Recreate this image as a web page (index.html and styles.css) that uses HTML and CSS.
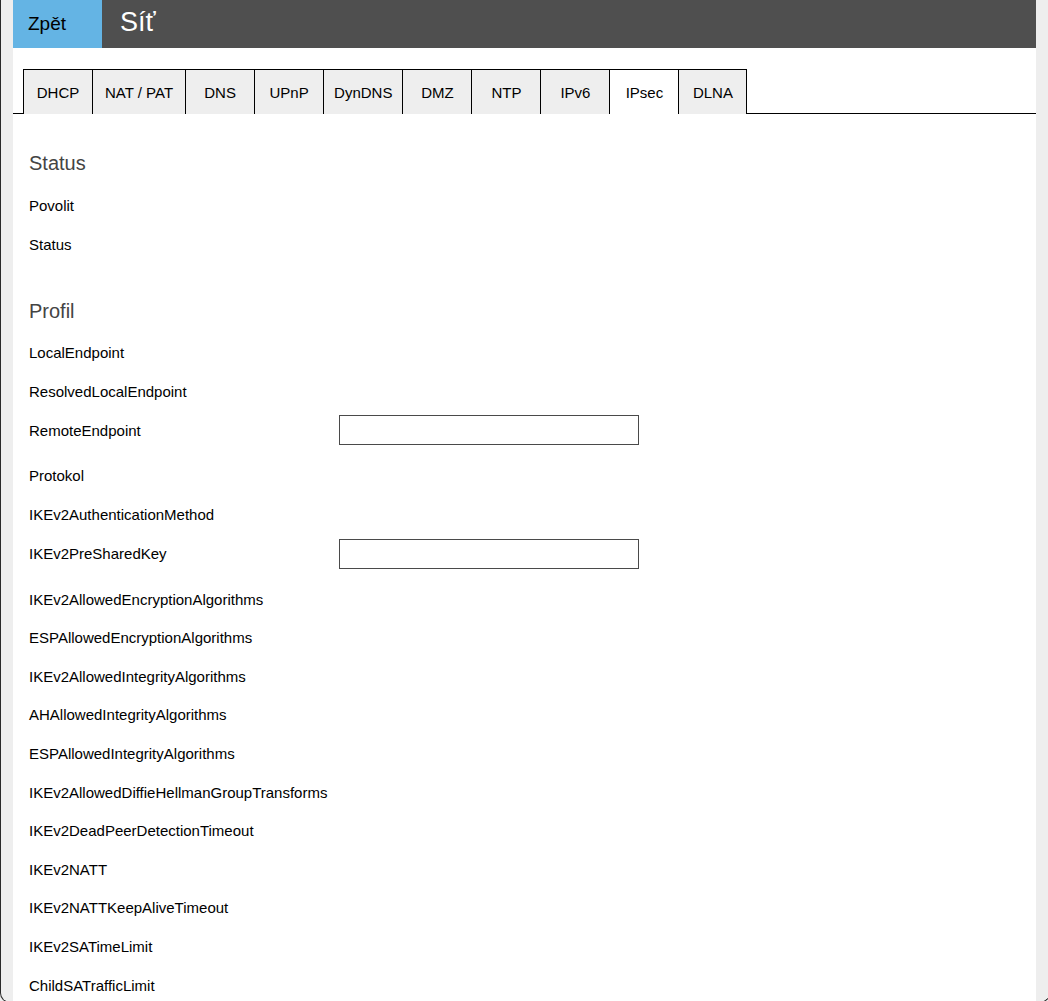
FILE: index.html
```html
<!DOCTYPE html>
<html lang="cs">
<head>
<meta charset="utf-8">
<title>Síť</title>
<link rel="stylesheet" href="styles.css">
</head>
<body>
<div class="window">
  <div class="panel">
    <header class="topbar">
      <a class="back">Zpět</a>
      <h1 class="title">Síť</h1>
    </header>
    <nav class="tabs">
      <span class="tab">DHCP</span>
      <span class="tab wide">NAT / PAT</span>
      <span class="tab">DNS</span>
      <span class="tab">UPnP</span>
      <span class="tab narrow">DynDNS</span>
      <span class="tab">DMZ</span>
      <span class="tab">NTP</span>
      <span class="tab">IPv6</span>
      <span class="tab active">IPsec</span>
      <span class="tab last">DLNA</span>
    </nav>
    <main class="content">
      <section class="section first">
        <h2 class="heading">Status</h2>
        <div class="row"><span class="label">Povolit</span></div>
        <div class="row"><span class="label">Status</span></div>
      </section>
      <section class="section second">
        <h2 class="heading">Profil</h2>
        <div class="row"><span class="label">LocalEndpoint</span></div>
        <div class="row"><span class="label">ResolvedLocalEndpoint</span></div>
        <div class="row with-field"><span class="label">RemoteEndpoint</span><input class="field" type="text"></div>
        <div class="row"><span class="label">Protokol</span></div>
        <div class="row"><span class="label">IKEv2AuthenticationMethod</span></div>
        <div class="row with-field"><span class="label">IKEv2PreSharedKey</span><input class="field" type="text"></div>
        <div class="row"><span class="label">IKEv2AllowedEncryptionAlgorithms</span></div>
        <div class="row"><span class="label">ESPAllowedEncryptionAlgorithms</span></div>
        <div class="row"><span class="label">IKEv2AllowedIntegrityAlgorithms</span></div>
        <div class="row"><span class="label">AHAllowedIntegrityAlgorithms</span></div>
        <div class="row"><span class="label">ESPAllowedIntegrityAlgorithms</span></div>
        <div class="row"><span class="label">IKEv2AllowedDiffieHellmanGroupTransforms</span></div>
        <div class="row"><span class="label">IKEv2DeadPeerDetectionTimeout</span></div>
        <div class="row"><span class="label">IKEv2NATT</span></div>
        <div class="row"><span class="label">IKEv2NATTKeepAliveTimeout</span></div>
        <div class="row"><span class="label">IKEv2SATimeLimit</span></div>
        <div class="row"><span class="label">ChildSATrafficLimit</span></div>
      </section>
    </main>
  </div>
</div>
</body>
</html>
```
FILE: styles.css
```css
html, body {
  margin: 0;
  padding: 0;
  background: #eeeeee;
  overflow: hidden;
}
body {
  font-family: "Liberation Sans", Arial, sans-serif;
  color: #000;
}
.window {
  width: 1050px;
  height: 1003px;
  box-sizing: border-box;
  border-left: 1px solid #2a2a2a;
  border-right: 1px solid #2a2a2a;
  border-bottom: 1px solid #2a2a2a;
  border-radius: 0 0 10px 10px;
  background: #eeeeee;
  padding: 0 13px 0 12px;
  overflow: hidden;
}
.panel {
  background: #fff;
  height: 100%;
}
.topbar {
  display: flex;
  height: 48px;
  background: #4f4f4f;
}
.back {
  display: flex;
  align-items: center;
  width: 89px;
  padding-left: 15px;
  box-sizing: border-box;
  background: #64b4e4;
  color: #000;
  font-size: 19px;
}
.title {
  margin: 0;
  padding-left: 18px;
  display: flex;
  align-items: center;
  color: #fff;
  font-size: 27px;
  font-weight: normal;
  padding-bottom: 3px;
}
.tabs {
  display: flex;
  margin-top: 21px;
  height: 45px;
}
.tabs::before {
  content: "";
  width: 10px;
  border-bottom: 1px solid #000;
}
.tabs::after {
  content: "";
  flex: 1;
  border-bottom: 1px solid #000;
}
.tab {
  box-sizing: border-box;
  min-width: 69px;
  padding: 1px 11px 0;
  text-align: center;
  line-height: 44px;
  font-size: 15px;
  background: #eeeeee;
  border-top: 1px solid #000;
  border-left: 1px solid #000;
}
.tab.wide {
  padding: 1px 12px 0;
}
.tab.narrow {
  padding: 1px 10px 0;
}
.tab.active {
  background: #fff;
}
.tab.last {
  border-right: 1px solid #000;
}
.content {
  padding: 0 16px;
}
.section {
  margin-top: 36px;
}
.section.first {
  margin-top: 37px;
}
.heading {
  margin: 0 0 11px;
  font-size: 20px;
  line-height: 24px;
  font-weight: normal;
  color: #444;
}
.second .heading {
  margin-bottom: 10px;
}
.row {
  display: flex;
  align-items: center;
  padding: 9px 0 7px;
}
.row.with-field {
  padding: 5px 0 11px;
}
.label {
  width: 310px;
  font-size: 15px;
  line-height: 22.6px;
}
.with-field .label {
  padding-top: 1px;
}
.field {
  box-sizing: border-box;
  width: 300px;
  height: 30px;
  margin: 0;
  border: 1px solid #4a4a4a;
  border-radius: 0;
  background: #fff;
  padding: 2px 6px;
  font-family: inherit;
  font-size: 15px;
}
```
